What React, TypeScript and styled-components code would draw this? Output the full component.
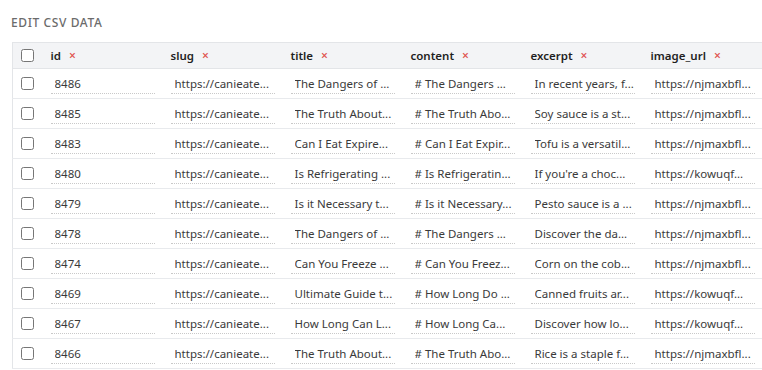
import React from "react";
import styled, { createGlobalStyle } from "styled-components";

const Global = createGlobalStyle`
  html, body { margin: 0; padding: 0; background: #fff; overflow: hidden; }
  body { font-family: "Segoe UI", "Noto Sans", "Open Sans", sans-serif; }
`;

const Page = styled.div`
  padding: 15px 0 0 12px;
  width: 750px;
  overflow: hidden;
`;

const Heading = styled.h2`
  margin: 0 0 11px -1px;
  font-size: 12px;
  line-height: 16px;
  font-weight: 500;
  color: #6b6b6b;
  text-transform: uppercase;
  letter-spacing: 0.6px;
`;

const Table = styled.table`
  width: 754px;
  border-collapse: collapse;
  table-layout: fixed;
  border-left: 1px solid #e3e5e8;
  font-size: 11.5px;
`;

const HeadRow = styled.tr`
  background: #f3f4f6;
  border-top: 1px solid #e3e5e8;
  border-bottom: 1px solid #e3e5e8;
`;

const Row = styled.tr`
  background: #fff;
  border-bottom: 1px solid #e8eaed;
`;

const CheckCell = styled.td`
  width: 34px;
  padding: 0 0 0 8px;
  box-sizing: border-box;
  vertical-align: middle;
`;

const HeadCell = styled.th`
  width: 120px;
  height: 26px;
  padding: 0 0 0 4px;
  box-sizing: border-box;
  text-align: left;
  font-weight: 600;
  color: #1f1f1f;
  white-space: nowrap;
`;

const Cell = styled.td`
  width: 120px;
  height: 30px;
  padding: 0 0 0 4px;
  box-sizing: border-box;
  vertical-align: middle;
`;

const Remove = styled.span`
  color: #e05252;
  font-size: 12px;
  margin-left: 8px;
  font-weight: 600;
`;

const Check = styled.input.attrs({ type: "checkbox" })`
  margin: 0;
  width: 13px;
  height: 13px;
  display: block;
`;

const Field = styled.input`
  box-sizing: border-box;
  width: 104px;
  height: 20px;
  padding: 0 0 0 4px;
  border: none;
  border-bottom: 1px dotted #c9c9c9;
  background: transparent;
  font: inherit;
  color: #3a3a3a;
  outline: none;
  text-overflow: ellipsis;
`;

const columns = ["id", "slug", "title", "content", "excerpt", "image_url"];

const rows: string[][] = [
  ["8486", "https://canieate...", "The Dangers of ...", "# The Dangers ...", "In recent years, f...", "https://njmaxbfl..."],
  ["8485", "https://canieate...", "The Truth About...", "# The Truth Abo...", "Soy sauce is a st...", "https://njmaxbfl..."],
  ["8483", "https://canieate...", "Can I Eat Expire...", "# Can I Eat Expir...", "Tofu is a versatil...", "https://njmaxbfl..."],
  ["8480", "https://canieate...", "Is Refrigerating ...", "# Is Refrigeratin...", "If you're a choc...", "https://kowuqf..."],
  ["8479", "https://canieate...", "Is it Necessary t...", "# Is it Necessary...", "Pesto sauce is a ...", "https://njmaxbfl..."],
  ["8478", "https://canieate...", "The Dangers of ...", "# The Dangers ...", "Discover the da...", "https://njmaxbfl..."],
  ["8474", "https://canieate...", "Can You Freeze ...", "# Can You Freez...", "Corn on the cob...", "https://njmaxbfl..."],
  ["8469", "https://canieate...", "Ultimate Guide t...", "# How Long Do ...", "Canned fruits ar...", "https://kowuqf..."],
  ["8467", "https://canieate...", "How Long Can L...", "# How Long Ca...", "Discover how lo...", "https://kowuqf..."],
  ["8466", "https://canieate...", "The Truth About...", "# The Truth Abo...", "Rice is a staple f...", "https://njmaxbfl..."],
];

export default function App() {
  return (
    <>
      <Global />
      <Page>
        <Heading>Edit CSV Data</Heading>
        <Table>
          <thead>
            <HeadRow>
              <CheckCell as="th">
                <Check />
              </CheckCell>
              {columns.map((c) => (
                <HeadCell key={c}>
                  {c}
                  <Remove>×</Remove>
                </HeadCell>
              ))}
            </HeadRow>
          </thead>
          <tbody>
            {rows.map((r, i) => (
              <Row key={i}>
                <CheckCell>
                  <Check />
                </CheckCell>
                {r.map((v, j) => (
                  <Cell key={j}>
                    <Field defaultValue={v} />
                  </Cell>
                ))}
              </Row>
            ))}
          </tbody>
        </Table>
      </Page>
    </>
  );
}
